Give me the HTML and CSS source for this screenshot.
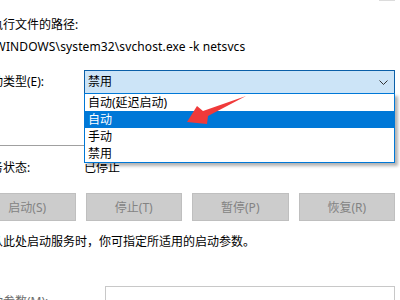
FILE: index.html
```html
<!DOCTYPE html>
<html lang="zh-CN">
<head>
    <meta charset="UTF-8">
    <title>服务属性</title>
    <link rel="stylesheet" href="styles.css">
</head>
<body>
    <div class="dialog">
        <div class="top-edge"><span class="edge-mark"></span></div>
        <div class="label-line">可执行文件的路径:</div>
        <div class="path">C:\WINDOWS\system32\svchost.exe -k netsvcs</div>

        <div class="row type-row">
            <span class="label">启动类型(E):</span>
            <div class="combo">
                <div class="combo-box">
                    <span>禁用</span>
                    <svg class="chevron" width="9" height="5" viewBox="0 0 9 5">
                        <path d="M0.5 0.5 L4.5 4.5 L8.5 0.5" fill="none" stroke="#333" stroke-width="1"/>
                    </svg>
                </div>
                <ul class="dropdown">
                    <li>自动(延迟启动)</li>
                    <li class="selected">自动</li>
                    <li>手动</li>
                    <li>禁用</li>
                </ul>
            </div>
        </div>

        <div class="sep"></div>

        <div class="row status-row">
            <span class="label">服务状态:</span>
            <span>已停止</span>
        </div>

        <div class="buttons">
            <button class="btn" disabled>启动(S)</button>
            <button class="btn" disabled>停止(T)</button>
            <button class="btn" disabled>暂停(P)</button>
            <button class="btn" disabled>恢复(R)</button>
        </div>

        <p class="hint">当从此处启动服务时，你可指定所适用的启动参数。</p>

        <div class="row param-row">
            <span class="label muted">启动参数(M):</span>
            <div class="input"></div>
        </div>
    </div>

    <svg class="arrow" width="400" height="300" viewBox="0 0 400 300">
        <polygon points="187,122 197,106 203,111 246,96 208,116 207,124" fill="#f03a3a"/>
    </svg>
</body>
</html>
```

FILE: styles.css
```css
body {
    margin: 0;
    background: #fff;
    overflow: hidden;
    width: 400px;
    height: 300px;
    font-family: "Noto Sans", "Noto Sans CJK SC", sans-serif;
    font-size: 12px;
    line-height: 16px;
    color: #000;
}
.dialog {
    margin-left: -21px;
    width: 416px;
}
.top-edge {
    display: flex;
    justify-content: flex-end;
    height: 17px;
}
.edge-mark {
    width: 16px;
    height: 1px;
    background: #dcdcdc;
}
.label-line {
    margin: 0;
}
.path {
    margin-top: 6px;
    letter-spacing: 0.12px;
}
.row {
    display: flex;
    align-items: center;
}
.label {
    width: 105px;
    flex: none;
}
.type-row {
    margin-top: 15px;
}
.combo {
    flex: 1;
    position: relative;
}
.combo-box {
    height: 22px;
    border: 1px solid #0a5fa8;
    background: #cce4f7;
    display: flex;
    align-items: center;
    justify-content: space-between;
    padding: 0 6px 0 3px;
}
.dropdown {
    position: absolute;
    left: 0;
    right: 0;
    top: 23px;
    margin: 0;
    padding: 0;
    list-style: none;
    background: #fff;
    border: 1px solid #0078d7;
    box-shadow: 3px 3px 3px rgba(0, 0, 0, 0.3);
    z-index: 2;
}
.dropdown li {
    height: 17px;
    line-height: 17px;
    padding-left: 3px;
}
.dropdown li.selected {
    background: #0078d7;
    color: #fff;
}
.sep {
    margin-top: 51px;
    height: 1px;
    background: #a0a0a0;
}
.status-row {
    margin-top: 14px;
}
.buttons {
    margin-top: 17px;
    display: grid;
    grid-template-columns: repeat(4, 1fr);
    gap: 10px;
}
.btn {
    height: 28px;
    border: 1px solid #bfbfbf;
    background: #cccccc;
    color: #838383;
    font-family: inherit;
    font-size: 12px;
    padding: 0;
}
.hint {
    margin: 13px 0 0;
}
.param-row {
    margin-top: 36px;
    align-items: flex-start;
}
.param-row .label {
    width: 126px;
    padding-top: 8px;
}
.muted {
    color: #6d6d6d;
}
.input {
    flex: 1;
    height: 22px;
    border: 1px solid #c8c8c8;
}
.arrow {
    position: absolute;
    left: 0;
    top: 0;
    z-index: 3;
    pointer-events: none;
}
```
